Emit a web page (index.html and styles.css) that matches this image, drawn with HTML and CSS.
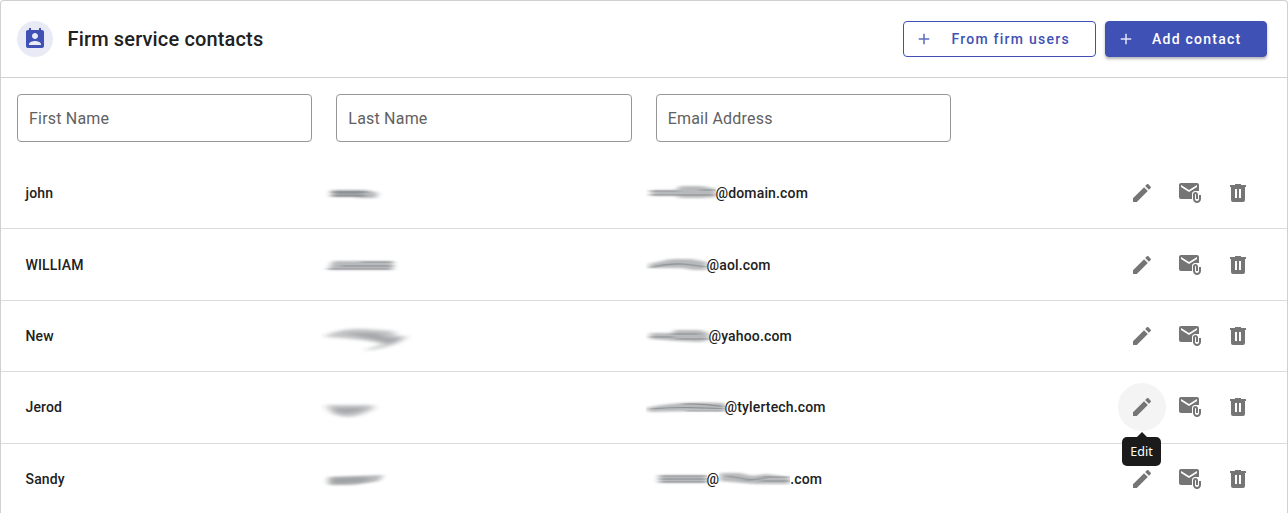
FILE: index.html
```
<!DOCTYPE html>
<html lang="en">
<head>
<meta charset="UTF-8">
<meta name="viewport" content="width=device-width, initial-scale=1.0">
<title>Firm service contacts</title>
<link rel="stylesheet" href="styles.css">
</head>
<body>
  <!-- Shared icons and filters -->
  <svg class="defs" width="0" height="0">
    <symbol id="plus" viewBox="0 0 24 24"><path d="M19 13h-6v6h-2v-6H5v-2h6V5h2v6h6z"/></symbol>
    <symbol id="pencil" viewBox="0 0 24 24"><path d="M3 17.25V21h3.75L17.81 9.94l-3.75-3.75L3 17.25zM20.71 7.04c.39-.39.39-1.02 0-1.41l-2.34-2.34c-.39-.39-1.02-.39-1.41 0l-1.83 1.83 3.75 3.75 1.83-1.83z"/></symbol>
    <symbol id="mail" viewBox="0 0 24 24"><path d="M21 10V4c0-1.1-.9-2-2-2H3c-1.1 0-1.99.9-1.99 2L1 16c0 1.1.9 2 2 2h11v-5c0-1.66 1.34-3 3-3h4zM11 11L3 6V4l8 5 8-5v2l-8 5z"/><path d="M21 14v4c0 1.1-.9 2-2 2s-2-.9-2-2v-4.5c0-.28.22-.5.5-.5s.5.22.5.5V18h2v-4.5c0-1.38-1.12-2.5-2.5-2.5S15 12.12 15 13.5V18c0 2.21 1.79 4 4 4s4-1.79 4-4v-4h-2z"/></symbol>
    <symbol id="trash" viewBox="0 0 24 24"><path d="M9 3v1H4v2h1v13a2 2 0 0 0 2 2h10a2 2 0 0 0 2-2V6h1V4h-5V3H9m0 5h2v9H9V8m4 0h2v9h-2V8z"/></symbol>
    <filter id="soft" x="-20%" y="-60%" width="140%" height="220%"><feGaussianBlur stdDeviation="3 1.2"/></filter>
    <filter id="softer" x="-20%" y="-60%" width="140%" height="220%"><feGaussianBlur stdDeviation="4 1.7"/></filter>
    <filter id="streak" x="-20%" y="-60%" width="140%" height="220%"><feGaussianBlur stdDeviation="3 0.6"/></filter>
  </svg>

  <div class="card">
    <div class="header">
      <div class="avatar">
        <svg width="24" height="24" viewBox="0 0 24 24"><path d="M19 3h-1V1h-2v2H8V1H6v2H5c-1.11 0-2 .9-2 2v14c0 1.1.89 2 2 2h14c1.1 0 2-.9 2-2V5c0-1.1-.9-2-2-2zm-7 3c1.66 0 3 1.34 3 3s-1.34 3-3 3-3-1.34-3-3 1.34-3 3-3zm6 12H6v-1c0-2 4-3.1 6-3.1s6 1.1 6 3.1v1z"/></svg>
      </div>
      <h1>Firm service contacts</h1>
      <button class="btn outlined"><svg width="18" height="18"><use href="#plus"/></svg>From firm users</button>
      <button class="btn raised"><svg width="18" height="18"><use href="#plus"/></svg>Add contact</button>
    </div>

    <form class="filters">
      <input type="text" placeholder="First Name">
      <input type="text" placeholder="Last Name">
      <input type="text" placeholder="Email Address">
    </form>

    <div class="row">
      <div class="first">john</div>
      <div class="last">
        <svg width="100" height="30">
          <path class="smudge" d="M10 12h36l11 3-2 5H38l-6-1H10z"/>
          <path class="smudge" d="M14 13h28v5H14z"/>
          <path class="lines" d="M11 14h36M11 18h34"/>
        </svg>
      </div>
      <div class="email">
        <svg width="70" height="30">
          <path class="smudge" d="M5 12h25l4-4h22l14 3v8l-14 1H34l-4-2H5z"/>
          <path class="lines" d="M4 13h28M4 17h64M54 12h16"/>
        </svg>@domain.com
      </div>
      <div class="actions">
        <button><svg width="24" height="24"><use href="#pencil"/></svg></button>
        <button><svg width="24" height="24"><use href="#mail"/></svg></button>
        <button><svg width="24" height="24"><use href="#trash"/></svg></button>
      </div>
    </div>

    <div class="row">
      <div class="first">WILLIAM</div>
      <div class="last">
        <svg width="100" height="30">
          <path class="smudge" d="M12 11h60v9H7z"/>
          <path class="lines" d="M7 19h62M20 16h51M40 12h31"/>
        </svg>
      </div>
      <div class="email">
        <svg width="61" height="30">
          <path class="smudge" d="M3 14l22-5h20l16 3v8H48l-12-2H3z"/>
          <path class="lines" d="M4 18q18-5 34-4l23 3"/>
        </svg>@aol.com
      </div>
      <div class="actions">
        <button><svg width="24" height="24"><use href="#pencil"/></svg></button>
        <button><svg width="24" height="24"><use href="#mail"/></svg></button>
        <button><svg width="24" height="24"><use href="#trash"/></svg></button>
      </div>
    </div>

    <div class="row">
      <div class="first">New</div>
      <div class="last">
        <svg width="100" height="36">
          <path class="smudge faint" d="M4 18q18-9 42-7l26 2 3 5 11 0-10 7q-14 6-34 8l20-7q-10-4-56-7z"/>
          <path class="smudge faint" d="M22 15h34l10 5 16 0-14 6-12-4z"/>
        </svg>
      </div>
      <div class="email">
        <svg width="63" height="30">
          <path class="smudge" d="M4 12h22l3-3h25l9 3v7l-9 2-22-1-28-2z"/>
          <path class="lines" d="M4 16h24M26 13h28M30 18h33"/>
        </svg>@yahoo.com
      </div>
      <div class="actions">
        <button><svg width="24" height="24"><use href="#pencil"/></svg></button>
        <button><svg width="24" height="24"><use href="#mail"/></svg></button>
        <button><svg width="24" height="24"><use href="#trash"/></svg></button>
      </div>
    </div>

    <div class="row">
      <div class="first">Jerod</div>
      <div class="last">
        <svg width="100" height="30">
          <path class="smudge faint" d="M6 13h46v4q-12 7-24 8-16 0-22-10z"/>
          <path class="smudge faint" d="M12 16h34q-14 7-30 5z"/>
        </svg>
      </div>
      <div class="email">
        <svg width="79" height="30">
          <path class="smudge" d="M0 16q30-7 79-5v8H44L3 20z"/>
          <path class="lines" d="M6 17q30-3 73 0M36 12q20-1 43 3M40 19h39"/>
        </svg>@tylertech.com
      </div>
      <div class="actions">
        <button class="hovered"><svg width="24" height="24"><use href="#pencil"/></svg><span class="tooltip">Edit</span></button>
        <button><svg width="24" height="24"><use href="#mail"/></svg></button>
        <button><svg width="24" height="24"><use href="#trash"/></svg></button>
      </div>
    </div>

    <div class="row">
      <div class="first">Sandy</div>
      <div class="last">
        <svg width="100" height="30">
          <path class="smudge" d="M8 13l54-2-4 6-26 4H8z"/>
          <path class="smudge faint" d="M10 14l36-1v5l-36 2z"/>
        </svg>
      </div>
      <div class="email">
        <svg width="61" height="30">
          <path class="smudge" d="M13 11h48v8H13z"/>
          <path class="lines" d="M14 12h47M14 15h47M14 18h47"/>
        </svg>@<svg width="71" height="30">
          <path class="smudge" d="M1 9h20l12 3 14-2 24 3v7H36L1 17z"/>
          <path class="lines" d="M8 12l24 4M26 17l20-3M44 13h27M42 17h29"/>
        </svg>.com
      </div>
      <div class="actions">
        <button><svg width="24" height="24"><use href="#pencil"/></svg></button>
        <button><svg width="24" height="24"><use href="#mail"/></svg></button>
        <button><svg width="24" height="24"><use href="#trash"/></svg></button>
      </div>
    </div>
  </div>
</body>
</html>
```
FILE: styles.css
```
* {
  box-sizing: border-box;
}

body {
  margin: 0;
  background-color: #fff;
  color: #212121;
  font-family: Roboto, "Liberation Sans", sans-serif;
}

svg {
  display: block;
  flex: none;
  fill: currentColor;
}

.defs {
  position: absolute;
}

.card {
  height: 513px;
  overflow: hidden;
  border: 1px solid #d0d0d0;
  border-bottom: none;
  border-radius: 4px 4px 0 0;
}

/* Header */
.header {
  display: flex;
  align-items: center;
  height: 77px;
  padding: 0 20px 0 16px;
  border-bottom: 1px solid #d0d0d0;
}

.avatar {
  display: flex;
  align-items: center;
  justify-content: center;
  width: 36px;
  height: 36px;
  border-radius: 50%;
  background-color: #e8eaf6;
  color: #3f51b5;
}

h1 {
  flex: 1;
  margin: 0 0 0 14.5px;
  font-size: 20px;
  font-weight: 500;
  letter-spacing: 0.15px;
}

.btn {
  display: flex;
  align-items: center;
  gap: 18.4px;
  height: 36px;
  padding: 0 0 0 11px;
  border: 1px solid #3f51b5;
  border-radius: 4px;
  font: 500 14px Roboto, sans-serif;
  letter-spacing: 1.25px;
}

.btn svg {
  opacity: 0.85;
}

.outlined {
  width: 193px;
  background-color: #fff;
  color: #3f51b5;
}

.raised {
  gap: 17px;
  width: 162px;
  margin-left: 9px;
  background-color: #3f51b5;
  color: #fff;
  box-shadow: 0 2px 3px rgba(0, 0, 0, 0.3);
}

/* Filter inputs */
.filters {
  display: grid;
  grid-template-columns: repeat(3, 1fr);
  gap: 24px;
  width: 966px;
  height: 79.85px;
  padding: 16px 16px 0;
}

input {
  min-width: 0;
  height: 48px;
  padding: 0 11px;
  border: 1px solid #969696;
  border-radius: 4px;
  font: 400 16px Roboto, sans-serif;
  letter-spacing: 0.2px;
}

input::placeholder {
  color: #616161;
}

/* Contact rows */
.row {
  display: grid;
  grid-template-columns: 295px 325px 1fr auto;
  align-items: center;
  height: 71.45px;
  padding: 0 25px 0 24.5px;
  border-bottom: 1px solid #dcdcdc;
  font-size: 14px;
  font-weight: 500;
  letter-spacing: 0.15px;
}

.email {
  display: flex;
  align-items: center;
}

/* Smeared-out names and addresses */
.smudge {
  fill: #888b8e;
  opacity: 0.6;
  filter: url(#soft);
}

.faint {
  opacity: 0.5;
  filter: url(#softer);
}

.lines {
  fill: none;
  stroke: #5e6368;
  stroke-width: 1.2;
  opacity: 0.5;
  filter: url(#streak);
}

/* Row buttons */
.actions {
  display: flex;
}

.actions button {
  display: flex;
  align-items: center;
  justify-content: center;
  position: relative;
  width: 48px;
  height: 48px;
  padding: 0;
  border: none;
  border-radius: 50%;
  background: none;
  color: #757575;
}

.actions .hovered {
  background-color: #f4f4f4;
}

.tooltip {
  position: absolute;
  top: 54px;
  left: 4px;
  z-index: 1;
  width: 39px;
  border-radius: 5px;
  background-color: #1b1b1b;
  color: #fff;
  font: 400 12.5px/29px "Noto Sans", sans-serif;
  text-align: center;
}

.tooltip::before {
  content: "";
  position: absolute;
  top: -5px;
  left: 15px;
  border: 5px solid transparent;
  border-top: none;
  border-bottom-color: #1b1b1b;
}
```
